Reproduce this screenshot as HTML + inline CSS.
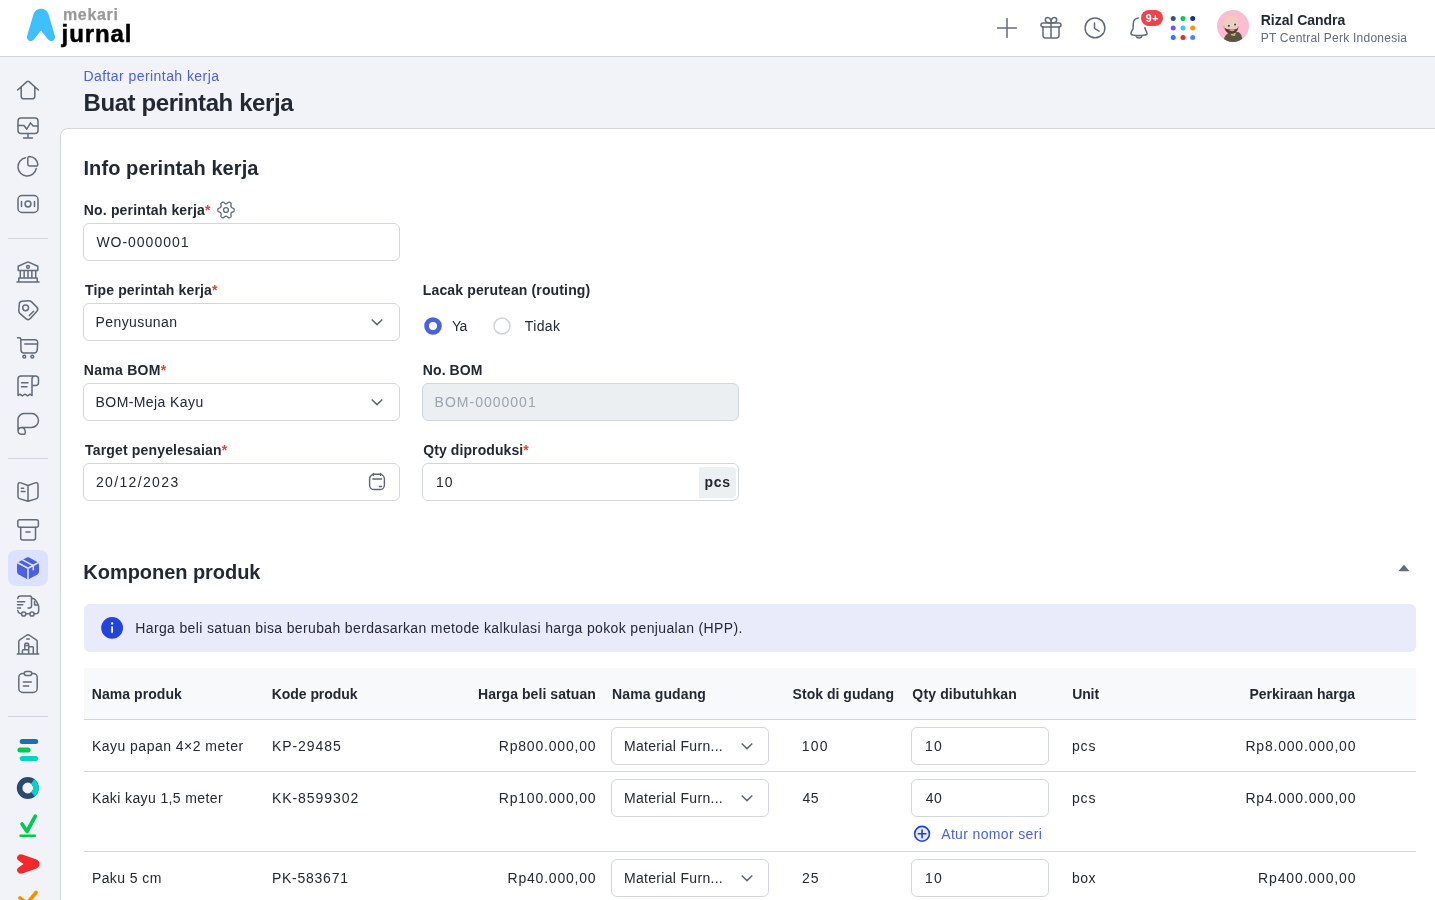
<!DOCTYPE html>
<html lang="id">
<head>
<meta charset="utf-8">
<title>Buat perintah kerja</title>
<style>
*{box-sizing:border-box;margin:0;padding:0}
html,body{width:1435px;height:900px;overflow:hidden;background:#f1f3f8;font-family:"Liberation Sans",sans-serif;color:#232933;font-size:14px}
.abs{position:absolute}
#content{will-change:transform}
.t{position:absolute;white-space:nowrap;line-height:20px;height:20px}
.b{font-weight:700}
#topbar{position:absolute;left:0;top:0;width:1435px;height:57px;background:#fff;border-bottom:1px solid #d0d6dd}
#card{position:absolute;left:60px;top:128px;width:1400px;height:800px;background:#fff;border:1px solid #d0d6dd;border-top-left-radius:8px}
.sep{position:absolute;left:8px;width:40px;height:1px;background:#d0d6dd}
.ic{position:absolute;left:16px;width:24px;height:24px;fill:none;stroke:#626b79;stroke-width:1.5;stroke-linecap:round;stroke-linejoin:round}
.inp{position:absolute;height:37px;border:1px solid #d0d6dd;border-radius:6px;background:#fff}
.red{color:#da473f}
.hr{position:absolute;left:84px;width:1332px;height:1px;background:#d0d6dd}
</style>
</head>
<body>
<!-- TOPBAR -->
<div id="topbar">
<svg class="abs" style="left:0;top:0" width="140" height="56" viewBox="0 0 140 56">
<path d="M41 8.8 C45 8.8 47.4 11 48.6 14.6 L54.8 35.4 C55.8 38.8 53.4 41 51.4 41 C49.9 41 48.9 40.4 47.9 39.2 L41 30.4 L34.1 39.2 C33.1 40.4 32.1 41 30.6 41 C28.6 41 26.2 38.8 27.2 35.4 L33.4 14.6 C34.6 11 37 8.8 41 8.8 Z" fill="#40bfff"/>
</svg>
<svg class="abs" style="left:990px;top:0" width="280" height="56" viewBox="990 0 280 56" fill="none" stroke="#626b79" stroke-width="1.5" stroke-linecap="round" stroke-linejoin="round">
<!-- plus -->
<path d="M997.5 28H1016.5M1007 18.5V37.500"/>
<!-- gift -->
<rect x="1041" y="23" width="20" height="3.900" rx="1.900"/>
<path d="M1043 26.900V35.500Q1043 37.900 1045.400 37.900H1056.600Q1059 37.900 1059 35.500V26.900M1051 23V37.900"/>
<path d="M1051 23C1048.500 23 1045.300 22.800 1045.300 20C1045.300 18.600 1046.400 17.600 1047.800 17.600C1050 17.600 1051 20 1051 23C1051 20 1052 17.600 1054.200 17.600C1055.600 17.600 1056.700 18.600 1056.700 20C1056.700 22.800 1053.500 23 1051 23Z"/>
<!-- clock -->
<circle cx="1095" cy="27.900" r="9.900"/>
<path d="M1094.500 23V28.400L1099 31.100"/>
<!-- bell -->
<path d="M1138.400 17.900C1135.500 18.300 1133.400 20.500 1133.300 23.500L1133.100 28C1133 29.800 1131.300 31.500 1131 33C1130.800 34.200 1131.500 34.800 1133 35.100C1137 35.800 1141 35.800 1145 35.100C1146.600 34.800 1147.300 34.200 1147 33C1146.700 31.500 1145.200 30 1144.900 27.600"/>
<path d="M1136.200 36.500C1137 38.600 1141 38.600 1141.800 36.500"/>
</svg>
<div class="abs" style="left:1141px;top:10px;width:22px;height:16px;border-radius:8px;background:#ee4349;box-shadow:0 0 0 1.500px #fff"></div>
<div id="badge" class="t b" style="left:1141px;top:10px;width:22px;text-align:center;font-size:10.500px;line-height:16px;height:16px;color:#fff;letter-spacing:0.600px;text-indent:0.600px">9+</div>
<svg class="abs" style="left:1168px;top:13px" width="30" height="30" viewBox="1168 13 30 30">
<circle cx="1173.200" cy="18.500" r="2.500" fill="#2f5878"/><circle cx="1183" cy="18.500" r="2.500" fill="#0ac654"/><circle cx="1192.700" cy="18.500" r="2.500" fill="#18327e"/>
<circle cx="1173.200" cy="28.100" r="2.500" fill="#7c4dff"/><circle cx="1183" cy="28.100" r="2.500" fill="#40c4ff"/><circle cx="1192.700" cy="28.100" r="2.500" fill="#ff9100"/>
<circle cx="1173.200" cy="37.600" r="2.500" fill="#2979ff"/><circle cx="1183" cy="37.600" r="2.500" fill="#f02525"/><circle cx="1192.700" cy="37.600" r="2.500" fill="#448aff"/>
</svg>
<svg class="abs" style="left:1217px;top:10px" width="32" height="32" viewBox="1217 10 32 32">
<defs><clipPath id="avc"><circle cx="1233" cy="26" r="16"/></clipPath></defs>
<circle cx="1233" cy="26" r="16" fill="#fcbcd1"/>
<g clip-path="url(#avc)">
<path d="M1223.500 42C1224 36 1226.500 33 1231 32.500L1238 32C1241 33 1242.500 37 1242.500 42Z" fill="#55573f"/>
<path d="M1230 32.500L1236 32.500L1235 36L1231.500 35.500Z" fill="#d9a98e"/>
<ellipse cx="1231.200" cy="24.200" rx="7.300" ry="8.400" fill="#f0cdb9"/>
<path d="M1224.200 26.500C1224.500 31 1227.500 33.800 1231.500 33.800C1235.500 33.800 1238.300 31 1238.500 26C1237.500 29 1236 29.500 1232 29.300C1228 29.300 1225.500 29.500 1224.200 26.500Z" fill="#5a3b2e"/>
<ellipse cx="1232" cy="30.200" rx="2.600" ry="1.100" fill="#c9a090"/>
<ellipse cx="1228.700" cy="25.600" rx="1.900" ry="1.500" fill="#f6ebe6"/><ellipse cx="1235" cy="24.400" rx="1.900" ry="1.500" fill="#f6ebe6"/><circle cx="1228.800" cy="25.800" r="1.150" fill="#2e4a66"/><circle cx="1235.100" cy="24.600" r="1.150" fill="#2e4a66"/><ellipse cx="1224" cy="27" rx="1" ry="1.500" fill="#e5b9a4"/>
</g>
</svg>
</div>
<!-- SIDEBAR -->
<div id="sidebar">
<svg class="ic" style="top:78px" viewBox="0 0 24 24"><path d="M1.6 12L11 3.600Q12 2.800 13 3.600L22.400 12M5.200 9.200V18.200Q5.200 20.800 7.800 20.800H16.200Q18.800 20.800 18.800 18.200V9.200"/></svg>
<svg class="ic" style="top:116px" viewBox="0 0 24 24"><rect x="2" y="2" width="20" height="15.500" rx="3"/><path d="M12 17.500V22M7.500 22H16.500M2 9.500H8L10.800 13.200L14.500 6.900L17.200 10H22"/></svg>
<svg class="ic" style="top:154px" viewBox="0 0 24 24"><path d="M9.500 3.800A9.200 9.200 0 1 0 20.200 14.600"/><path d="M13.500 2.600A8.400 8.400 0 0 1 21.800 10.400Q21.900 12 20.200 12H13.500Q11.800 12 11.800 10.300V4.300Q11.800 2.600 13.500 2.600Z"/></svg>
<svg class="ic" style="top:192px" viewBox="0 0 24 24"><rect x="2" y="3.500" width="20" height="17" rx="4"/><path d="M5.500 9.500V14.500M18.500 9.500V14.500"/><circle cx="12" cy="12" r="2.900"/></svg>
<div class="sep" style="top:238px"></div>
<svg class="ic" style="top:260px" viewBox="0 0 24 24"><path d="M2.200 6.200L11.400 2.100Q12 1.800 12.600 2.100L21.800 6.200V10.500H2.200ZM4.300 10.500V18M8.150 10.500V18M12 10.500V18M15.850 10.500V18M19.700 10.500V18M2.800 18H21.200V22H2.800ZM1 22.100H23"/><circle cx="12" cy="6.900" r="1.400"/></svg>
<svg class="ic" style="top:298px" viewBox="0 0 24 24"><path d="M6 3.200L12.500 2.700Q14.300 2.600 15.600 3.900L20.800 9.100Q22.800 11.100 20.900 13.200L14.300 20.500Q12.400 22.600 10.200 20.800L4.100 15.600Q2.700 14.400 2.800 12.700L3.300 5.900Q3.500 3.400 6 3.200Z"/><circle cx="9.600" cy="9.800" r="2.900"/><path d="M13.300 17.500L17.600 13.200"/></svg>
<svg class="ic" style="top:336px" viewBox="0 0 24 24"><path d="M1.500 1.700H3.600Q4.800 1.700 4.800 3L5 14Q5 17 8 17H18Q20.900 17 21.200 14L21.700 7Q21.900 3.800 18.700 3.800H4.900M8.700 8H21.400"/><circle cx="8.300" cy="20.700" r="1.400"/><circle cx="16.300" cy="20.700" r="1.400"/></svg>
<svg class="ic" style="top:374px" viewBox="0 0 24 24"><path d="M16 11.500H19.500Q22.500 11.500 22.500 8.500V5Q22.500 2 19.500 2H5Q2 2 2 5V21.500L4 20.200L6.300 21.900L9 20.200L11.700 21.900L14 20.200L16 21.500V5Q16 2 19 2M5.500 8.700H12M5.500 12.700H11"/></svg>
<svg class="ic" style="top:412px" viewBox="0 0 24 24"><path d="M6 15.400H15.600A6.900 6.900 0 0 0 15.600 1.600H8A6 6 0 0 0 2 7.600V19A3.300 3.300 0 0 0 5.300 22.300H7.500Q9.500 22.300 9.300 20Q9 15.400 5.500 15.400Q2.300 15.600 2 19"/></svg>
<div class="sep" style="top:458px"></div>
<svg class="ic" style="top:480px" viewBox="0 0 24 24"><path d="M12 5.500L5 2.900Q2 2 2 5V16.500Q2 18.300 4 18.900L12 21.300L20 18.900Q22 18.300 22 16.500V5Q22 2 19 2.900L12 5.500V21.300M5.300 8.300H7.700M5.300 11.600H9"/></svg>
<svg class="ic" style="top:518px" viewBox="0 0 24 24"><rect x="1.800" y="1.800" width="20.600" height="7.500" rx="2"/><path d="M4.700 9.300V20Q4.700 22 6.700 22H17.500Q19.500 22 19.500 20V9.300M10 14H14"/></svg>
<div class="abs" style="left:8px;top:550px;width:40px;height:36px;border-radius:8px;background:#dbe2fd"></div>
<svg class="abs" style="left:16px;top:556px" width="24" height="24" viewBox="0 0 24 24"><path d="M10.800 1.500Q12 0.900 13.200 1.500L21.400 5.900Q23 6.800 23 8.600V15.800Q23 17.600 21.400 18.500L13.200 22.900Q12 23.500 10.800 22.900L2.600 18.500Q1 17.600 1 15.800V8.600Q1 6.800 2.600 5.900Z" fill="#4b61dd"/><path d="M1.800 6.800L12 12.300L22.200 6.800M12 12.300V23.200M6.600 3.900L17.300 9.600V13.800" fill="none" stroke="#dbe2fd" stroke-width="1.600" stroke-linecap="round" stroke-linejoin="round"/></svg>
<svg class="ic" style="top:594px" viewBox="0 0 24 24"><path d="M1.800 4.500Q2 2 4.500 2H14Q15.500 2 15.500 3.500V12Q15.500 14 13.500 14H12M15.500 4Q19 4.500 20.500 7.500L22.300 11Q22.700 12 22.700 13V16.500Q22.700 19.800 19.500 19.800H18.200M13.800 19.800H9.900M5.500 19.800Q2 19.500 1.800 16.500M1.500 7.700H8.700M1.500 10.700H6.700M1.500 14H4.500M18.600 7.500V11H22"/><circle cx="7.700" cy="20" r="2.100"/><circle cx="16" cy="20" r="2.100"/></svg>
<svg class="ic" style="top:632px" viewBox="0 0 24 24"><path d="M2.800 22V9.500Q2.800 8.500 3.800 7.800L11 3Q12 2.400 13 3L20.200 7.800Q21.200 8.500 21.200 9.500V22M1.300 22H22.700M10.700 7H13.300M8.800 17.700V12.500Q8.800 11.300 10 11.300H11.500Q12.700 11.300 12.700 12.500V22M6.400 22V18.700Q6.400 17.700 7.400 17.700H12.700M12.700 14.700H16.300Q17.300 14.700 17.300 15.700V22M10 13.600H11.500"/></svg>
<svg class="ic" style="top:670px" viewBox="0 0 24 24"><rect x="2.800" y="3.400" width="18.400" height="19" rx="4"/><rect x="8.300" y="1.400" width="7.400" height="4" rx="1.800" fill="#f1f3f8"/><path d="M7.300 12H15.300M7.300 16H12.700"/></svg>
<div class="sep" style="top:716px"></div>
<svg class="abs" style="left:8px;top:730px" width="40" height="170" viewBox="8 730 40 170">
<rect x="19.700" y="739" width="18.500" height="5" rx="2.500" fill="#1a6fb5"/>
<rect x="17.400" y="747.500" width="13.200" height="5" rx="2.500" fill="#00c853"/>
<rect x="19.700" y="756" width="18.500" height="5" rx="2.500" fill="#00d4c8"/>
<circle cx="27.800" cy="788" r="8.200" fill="none" stroke="#2b4a6f" stroke-width="5.600"/>
<path d="M32.600 781.400A8.200 8.200 0 0 1 33 794.400" fill="none" stroke="#00d4c8" stroke-width="5.600"/>
<path d="M22 824L27 831.500L35.300 816.200" fill="none" stroke="#00c853" stroke-width="3.700" stroke-linecap="round" stroke-linejoin="round"/>
<path d="M20.500 835.700H35" fill="none" stroke="#00c853" stroke-width="2.400" stroke-linecap="round"/>
<path d="M17.600 856Q19.500 853.600 23 854.700L36.500 859.600Q39.600 861 39.600 864Q39.600 867 36.500 868.400L23 873.300Q19.500 874.400 17.600 872Q16 869.500 18.500 867.500L23.500 864L18.500 860.500Q16 858.500 17.600 856Z" fill="#f02a2a"/>
<path d="M20 897.800L27 903.500L36 892.500" fill="none" stroke="#ff8c00" stroke-width="3.600" stroke-linecap="round" stroke-linejoin="round"/>
</svg>
</div>
<!-- PAGE HEADER -->
<div id="pagehead"></div>
<!-- CARD -->
<div id="card"></div>
<div id="content">
<div class="inp" style="left:83px;top:223px;width:317px;height:38px;"></div>
<div class="inp" style="left:83px;top:303px;width:317px;height:38px;"></div>
<svg class="abs" style="left:369px;top:314px" width="16" height="16" viewBox="0 0 16 16" fill="none" stroke="#5d6675" stroke-width="1.500"><path d="M2.700 5.500L8 10.600L13.300 5.500"/></svg>
<div class="inp" style="left:83px;top:383px;width:317px;height:38px;"></div>
<svg class="abs" style="left:369px;top:394px" width="16" height="16" viewBox="0 0 16 16" fill="none" stroke="#5d6675" stroke-width="1.500"><path d="M2.700 5.500L8 10.600L13.300 5.500"/></svg>
<div class="inp" style="left:422px;top:383px;width:317px;height:38px;background:#eceff2;"></div>
<div class="inp" style="left:83px;top:463px;width:317px;height:38px;"></div>
<div class="inp" style="left:422px;top:463px;width:317px;height:38px;"></div>
<div class="abs" style="left:699px;top:466.500px;width:37px;height:31px;background:#edf0f2;border-radius:0 4px 4px 0"></div>
<svg class="abs" style="left:216px;top:200px" width="20" height="20" viewBox="0 0 20 20" fill="none" stroke="#626b79" stroke-width="1.300" stroke-linejoin="round"><path id="gearp" d="M18.20 10.00L18.17 10.45L18.08 10.89L17.93 11.32L17.69 11.72L16.81 11.92L16.28 12.14L15.88 12.37L15.55 12.60L15.30 12.83L15.11 13.10L14.99 13.40L14.92 13.75L14.89 14.16L14.91 14.64L14.99 15.23L15.26 16.13L15.05 16.55L14.78 16.91L14.46 17.21L14.10 17.46L13.71 17.66L13.31 17.80L12.88 17.87L12.43 17.85L11.82 17.15L11.37 16.78L10.99 16.53L10.64 16.35L10.31 16.23L10.00 16.20L9.69 16.23L9.36 16.35L9.01 16.53L8.63 16.78L8.18 17.15L7.57 17.85L7.12 17.87L6.69 17.80L6.29 17.66L5.90 17.46L5.54 17.21L5.22 16.91L4.95 16.55L4.74 16.13L5.01 15.23L5.09 14.64L5.11 14.16L5.08 13.75L5.01 13.40L4.89 13.10L4.70 12.83L4.45 12.60L4.12 12.37L3.72 12.14L3.19 11.92L2.31 11.72L2.07 11.32L1.92 10.89L1.83 10.45L1.80 10.00L1.83 9.55L1.92 9.11L2.07 8.68L2.31 8.28L3.19 8.08L3.72 7.86L4.12 7.63L4.45 7.40L4.70 7.17L4.89 6.90L5.01 6.60L5.08 6.25L5.11 5.84L5.09 5.36L5.01 4.77L4.74 3.87L4.95 3.45L5.22 3.09L5.54 2.79L5.90 2.54L6.29 2.34L6.69 2.20L7.12 2.13L7.57 2.15L8.18 2.85L8.63 3.22L9.01 3.47L9.36 3.65L9.69 3.77L10.00 3.80L10.31 3.77L10.64 3.65L10.99 3.47L11.37 3.22L11.82 2.85L12.43 2.15L12.88 2.13L13.31 2.20L13.71 2.34L14.10 2.54L14.46 2.79L14.78 3.09L15.05 3.45L15.26 3.87L14.99 4.77L14.91 5.36L14.89 5.84L14.92 6.25L14.99 6.60L15.11 6.90L15.30 7.17L15.55 7.40L15.88 7.63L16.28 7.86L16.81 8.08L17.69 8.28L17.93 8.68L18.08 9.11L18.17 9.55Z"/><circle cx="10" cy="10" r="2.450"/></svg>
<svg class="abs" style="left:423px;top:316px" width="90" height="20" viewBox="0 0 90 20"><circle cx="10" cy="10" r="6.400" fill="#fff" stroke="#4b61dd" stroke-width="4.800"/><circle cx="79" cy="10" r="8" fill="#fff" stroke="#d0d6dd" stroke-width="1.600"/></svg>
<svg class="abs" style="left:367px;top:471px" width="20" height="20" viewBox="0 0 20 20" fill="none" stroke="#5d6675" stroke-width="1.400" stroke-linecap="round" stroke-linejoin="round"><rect x="2.600" y="3.300" width="14.800" height="15.200" rx="4.600"/><path d="M5.800 8H14.600M6.400 2.500V4.400M13.500 2.500V4.400M12.300 15.500H14.600"/></svg>
<svg class="abs" style="left:1396px;top:562px" width="16" height="12" viewBox="0 0 16 12"><path d="M2.300 9.300L8 2.800L13.700 9.300Z" fill="#626b79"/></svg>
<div class="abs" style="left:84px;top:604px;width:1332px;height:48px;border-radius:6px;background:#e9ebfa"></div>
<svg class="abs" style="left:100px;top:616px" width="24" height="24" viewBox="0 0 24 24"><circle cx="12.100" cy="11.900" r="10.900" fill="#2443d8"/><rect x="11.200" y="10.200" width="1.800" height="6.600" rx="0.600" fill="#fff"/><circle cx="12.100" cy="7.500" r="1.150" fill="#fff"/></svg>
<div class="abs" style="left:84px;top:668px;width:1332px;height:51px;background:#f8f9fb"></div>
<div class="hr" style="top:719px"></div>
<div class="hr" style="top:771px"></div>
<div class="hr" style="top:851px"></div>
<div class="inp" style="left:611px;top:727px;width:158px;height:38px;"></div>
<svg class="abs" style="left:738.5px;top:738px" width="16" height="16" viewBox="0 0 16 16" fill="none" stroke="#5d6675" stroke-width="1.500"><path d="M2.700 5.500L8 10.600L13.300 5.500"/></svg>
<div class="inp" style="left:911px;top:727px;width:138px;height:38px;"></div>
<div class="inp" style="left:611px;top:779px;width:158px;height:38px;"></div>
<svg class="abs" style="left:738.5px;top:790px" width="16" height="16" viewBox="0 0 16 16" fill="none" stroke="#5d6675" stroke-width="1.500"><path d="M2.700 5.500L8 10.600L13.300 5.500"/></svg>
<div class="inp" style="left:911px;top:779px;width:138px;height:38px;"></div>
<div class="inp" style="left:611px;top:859px;width:158px;height:38px;"></div>
<svg class="abs" style="left:738.5px;top:870px" width="16" height="16" viewBox="0 0 16 16" fill="none" stroke="#5d6675" stroke-width="1.500"><path d="M2.700 5.500L8 10.600L13.300 5.500"/></svg>
<div class="inp" style="left:911px;top:859px;width:138px;height:38px;"></div>
<svg class="abs" style="left:912px;top:824px" width="20" height="20" viewBox="0 0 20 20" fill="none" stroke="#1e40d0" stroke-width="1.600" stroke-linecap="round"><circle cx="10.050" cy="9.800" r="7.400" fill="#e9ebfa"/><path d="M6.200 9.800H13.900M10.050 5.950V13.650"/></svg>
<div id="t_daftar" class="t" style="top:66px;font-size:14px;line-height:20px;height:20px;color:#4b61dd;letter-spacing:0.438px;left:83.41px;">Daftar perintah kerja</div>
<div id="t_buat" class="t b" style="top:87px;font-size:24px;line-height:32px;height:32px;color:#232933;letter-spacing:-0.408px;left:83.5px;">Buat perintah kerja</div>
<div id="t_info" class="t b" style="top:154px;font-size:20px;line-height:28px;height:28px;color:#232933;letter-spacing:0.092px;left:83.45px;">Info perintah kerja</div>
<div id="t_l1" class="t b" style="top:200px;font-size:14px;line-height:20px;height:20px;color:#232933;letter-spacing:0.158px;left:83.82px;">No. perintah kerja<span class="red">*</span></div>
<div id="t_v1" class="t" style="top:232px;font-size:14px;line-height:20px;height:20px;color:#232933;letter-spacing:0.978px;left:96.4px;">WO-0000001</div>
<div id="t_l2" class="t b" style="top:280px;font-size:14px;line-height:20px;height:20px;color:#232933;letter-spacing:0.147px;left:85px;">Tipe perintah kerja<span class="red">*</span></div>
<div id="t_v2" class="t" style="top:312px;font-size:14px;line-height:20px;height:20px;color:#232933;letter-spacing:0.393px;left:95.61px;">Penyusunan</div>
<div id="t_l2b" class="t b" style="top:280px;font-size:14px;line-height:20px;height:20px;color:#232933;letter-spacing:0.141px;left:422.82px;">Lacak perutean (routing)</div>
<div id="t_ya" class="t" style="top:316px;font-size:14px;line-height:20px;height:20px;color:#232933;letter-spacing:-0.6px;left:451.88px;">Ya</div>
<div id="t_tidak" class="t" style="top:316px;font-size:14px;line-height:20px;height:20px;color:#232933;letter-spacing:0.371px;left:524.78px;">Tidak</div>
<div id="t_l3" class="t b" style="top:360px;font-size:14px;line-height:20px;height:20px;color:#232933;letter-spacing:0.265px;left:83.82px;">Nama BOM<span class="red">*</span></div>
<div id="t_v3" class="t" style="top:392px;font-size:14px;line-height:20px;height:20px;color:#232933;letter-spacing:0.407px;left:95.61px;">BOM-Meja Kayu</div>
<div id="t_l3b" class="t b" style="top:360px;font-size:14px;line-height:20px;height:20px;color:#232933;letter-spacing:0.083px;left:422.82px;">No. BOM</div>
<div id="t_v3b" class="t" style="top:392px;font-size:14px;line-height:20px;height:20px;color:#9aa4b0;letter-spacing:1.001px;left:434.61px;">BOM-0000001</div>
<div id="t_l4" class="t b" style="top:440px;font-size:14px;line-height:20px;height:20px;color:#232933;letter-spacing:0.166px;left:85px;">Target penyelesaian<span class="red">*</span></div>
<div id="t_v4" class="t" style="top:472px;font-size:14px;line-height:20px;height:20px;color:#232933;letter-spacing:1.351px;left:95.94px;">20/12/2023</div>
<div id="t_l4b" class="t b" style="top:440px;font-size:14px;line-height:20px;height:20px;color:#232933;letter-spacing:0.092px;left:423.26px;">Qty diproduksi<span class="red">*</span></div>
<div id="t_v4b" class="t" style="top:472px;font-size:14px;line-height:20px;height:20px;color:#232933;letter-spacing:1.151px;left:435.92px;">10</div>
<div id="t_pcs" class="t b" style="top:472px;font-size:14px;line-height:20px;height:20px;color:#232933;letter-spacing:0.659px;left:704.62px;">pcs</div>
<div id="t_komp" class="t b" style="top:558px;font-size:20px;line-height:28px;height:28px;color:#232933;letter-spacing:-0.046px;left:83.35px;">Komponen produk</div>
<div id="t_banner" class="t" style="top:618px;font-size:14px;line-height:20px;height:20px;color:#232933;letter-spacing:0.358px;left:135.31px;">Harga beli satuan bisa berubah berdasarkan metode kalkulasi harga pokok penjualan (HPP).</div>
<div id="t_h1" class="t b" style="top:684px;font-size:14px;line-height:20px;height:20px;color:#232933;letter-spacing:0.062px;left:91.72px;">Nama produk</div>
<div id="t_h2" class="t b" style="top:684px;font-size:14px;line-height:20px;height:20px;color:#232933;letter-spacing:-0.064px;left:271.82px;">Kode produk</div>
<div id="t_h3" class="t b" style="top:684px;font-size:14px;line-height:20px;height:20px;color:#232933;letter-spacing:0.078px;right:839.04px;">Harga beli satuan</div>
<div id="t_h4" class="t b" style="top:684px;font-size:14px;line-height:20px;height:20px;color:#232933;letter-spacing:0.121px;left:612.12px;">Nama gudang</div>
<div id="t_h5" class="t b" style="top:684px;font-size:14px;line-height:20px;height:20px;color:#232933;letter-spacing:0.024px;left:792.58px;">Stok di gudang</div>
<div id="t_h6" class="t b" style="top:684px;font-size:14px;line-height:20px;height:20px;color:#232933;letter-spacing:0.135px;left:912.36px;">Qty dibutuhkan</div>
<div id="t_h7" class="t b" style="top:684px;font-size:14px;line-height:20px;height:20px;color:#232933;letter-spacing:-0.096px;left:1072.14px;">Unit</div>
<div id="t_h8" class="t b" style="top:684px;font-size:14px;line-height:20px;height:20px;color:#232933;letter-spacing:-0.025px;right:80.02px;">Perkiraan harga</div>
<div id="t_r1n" class="t" style="top:736px;font-size:14px;line-height:20px;height:20px;color:#232933;letter-spacing:0.48px;left:91.91px;">Kayu papan 4×2 meter</div>
<div id="t_r1k" class="t" style="top:736px;font-size:14px;line-height:20px;height:20px;color:#232933;letter-spacing:0.928px;left:271.91px;">KP-29485</div>
<div id="t_r1h" class="t" style="top:736px;font-size:14px;line-height:20px;height:20px;color:#232933;letter-spacing:0.807px;right:838.64px;">Rp800.000,00</div>
<div id="t_r1g" class="t" style="top:736px;font-size:14px;line-height:20px;height:20px;color:#232933;letter-spacing:0.308px;left:624.01px;">Material Furn...</div>
<div id="t_r1s" class="t" style="top:736px;font-size:14px;line-height:20px;height:20px;color:#232933;letter-spacing:1.283px;left:801.72px;">100</div>
<div id="t_r1q" class="t" style="top:736px;font-size:14px;line-height:20px;height:20px;color:#232933;letter-spacing:1.051px;left:925.12px;">10</div>
<div id="t_r1u" class="t" style="top:736px;font-size:14px;line-height:20px;height:20px;color:#232933;letter-spacing:0.913px;left:1071.92px;">pcs</div>
<div id="t_r1p" class="t" style="top:736px;font-size:14px;line-height:20px;height:20px;color:#232933;letter-spacing:0.8px;right:78.75px;">Rp8.000.000,00</div>
<div id="t_r2n" class="t" style="top:788px;font-size:14px;line-height:20px;height:20px;color:#232933;letter-spacing:0.391px;left:91.91px;">Kaki kayu 1,5 meter</div>
<div id="t_r2k" class="t" style="top:788px;font-size:14px;line-height:20px;height:20px;color:#232933;letter-spacing:0.936px;left:271.91px;">KK-8599302</div>
<div id="t_r2h" class="t" style="top:788px;font-size:14px;line-height:20px;height:20px;color:#232933;letter-spacing:0.807px;right:838.64px;">Rp100.000,00</div>
<div id="t_r2g" class="t" style="top:788px;font-size:14px;line-height:20px;height:20px;color:#232933;letter-spacing:0.308px;left:624.01px;">Material Furn...</div>
<div id="t_r2s" class="t" style="top:788px;font-size:14px;line-height:20px;height:20px;color:#232933;letter-spacing:0.614px;left:802.38px;">45</div>
<div id="t_r2q" class="t" style="top:788px;font-size:14px;line-height:20px;height:20px;color:#232933;letter-spacing:0.395px;left:925.78px;">40</div>
<div id="t_r2u" class="t" style="top:788px;font-size:14px;line-height:20px;height:20px;color:#232933;letter-spacing:0.913px;left:1071.92px;">pcs</div>
<div id="t_r2p" class="t" style="top:788px;font-size:14px;line-height:20px;height:20px;color:#232933;letter-spacing:0.8px;right:78.75px;">Rp4.000.000,00</div>
<div id="t_r3n" class="t" style="top:868px;font-size:14px;line-height:20px;height:20px;color:#232933;letter-spacing:0.41px;left:91.91px;">Paku 5 cm</div>
<div id="t_r3k" class="t" style="top:868px;font-size:14px;line-height:20px;height:20px;color:#232933;letter-spacing:0.751px;left:271.91px;">PK-583671</div>
<div id="t_r3h" class="t" style="top:868px;font-size:14px;line-height:20px;height:20px;color:#232933;letter-spacing:0.786px;right:838.66px;">Rp40.000,00</div>
<div id="t_r3g" class="t" style="top:868px;font-size:14px;line-height:20px;height:20px;color:#232933;letter-spacing:0.308px;left:624.01px;">Material Furn...</div>
<div id="t_r3s" class="t" style="top:868px;font-size:14px;line-height:20px;height:20px;color:#232933;letter-spacing:1.051px;left:801.94px;">25</div>
<div id="t_r3q" class="t" style="top:868px;font-size:14px;line-height:20px;height:20px;color:#232933;letter-spacing:1.051px;left:925.12px;">10</div>
<div id="t_r3u" class="t" style="top:868px;font-size:14px;line-height:20px;height:20px;color:#232933;letter-spacing:0.551px;left:1071.92px;">box</div>
<div id="t_r3p" class="t" style="top:868px;font-size:14px;line-height:20px;height:20px;color:#232933;letter-spacing:0.853px;right:78.7px;">Rp400.000,00</div>
<div id="t_mekari" class="t b" style="top:5px;font-size:16px;line-height:20px;height:20px;color:#999999;letter-spacing:0.69px;left:62.9px;-webkit-text-stroke:0.250px #999;">mekari</div>
<div id="t_jurnal" class="t b" style="top:18px;font-size:24px;line-height:32px;height:32px;color:#000000;letter-spacing:0.9px;left:61.58px;-webkit-text-stroke:0.500px #000;">jurnal</div>
<div id="t_uname" class="t b" style="top:10px;font-size:14px;line-height:20px;height:20px;color:#232933;letter-spacing:-0.019px;left:1260.72px;">Rizal Candra</div>
<div id="t_ucomp" class="t" style="top:29px;font-size:12px;line-height:18px;height:18px;color:#626b79;letter-spacing:0.245px;left:1260.65px;">PT Central Perk Indonesia</div>
<div id="t_atur" class="t" style="top:824px;font-size:14px;line-height:20px;height:20px;color:#4b61dd;letter-spacing:0.352px;left:941.2px;">Atur nomor seri</div>
</div>
</body>
</html>
